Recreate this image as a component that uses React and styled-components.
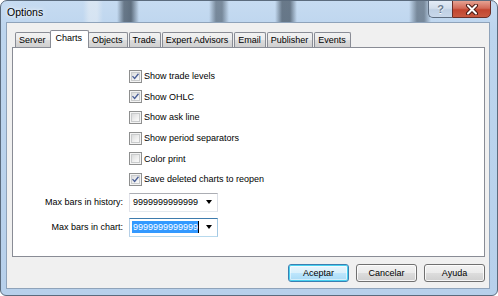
import React from "react";
import styled, { createGlobalStyle, css } from "styled-components";

const GlobalStyle = createGlobalStyle`
  html, body { margin: 0; padding: 0; width: 498px; height: 296px; overflow: hidden; background: #fff; }
  * { box-sizing: border-box; }
`;

const UI_FONT = `"Liberation Sans", Arial, sans-serif`;
const FS = "9px";

const Frame = styled.div`
  width: 498px;
  height: 296px;
  display: flex;
  flex-direction: column;
  border: 1px solid #5b6b7d;
  border-radius: 7px 7px 6px 6px;
  overflow: hidden;
  font-family: ${UI_FONT};
  background:
    linear-gradient(90deg,
      transparent 0, transparent 82px,
      rgba(235,240,245,0.5) 88px, rgba(235,240,245,0.5) 96px, transparent 102px,
      transparent 116px, rgba(28,40,52,0.55) 123px, rgba(28,40,52,0.6) 130px, transparent 138px,
      transparent 208px, rgba(28,40,52,0.45) 215px, rgba(28,40,52,0.45) 221px, transparent 228px,
      transparent 274px, rgba(28,40,52,0.55) 281px, rgba(28,40,52,0.55) 289px, transparent 296px,
      transparent 408px, rgba(28,40,52,0.45) 416px, rgba(28,40,52,0.45) 423px, transparent 430px,
      transparent 100%) top / 100% 23px no-repeat,
    linear-gradient(180deg, #c6dbf1 0, #bdd5ee 30px, #b7d0eb 100%);
`;

const TitleBar = styled.div`
  height: 21px;
  flex: none;
  display: flex;
  align-items: flex-start;
  padding: 0 6px 0 6px;
`;

const Title = styled.div`
  flex: 1;
  font-size: 10.5px;
  line-height: 21px;
  color: #000;
  padding-top: 1px;
  text-shadow: 0 0 6px rgba(255,255,255,0.95), 0 0 3px rgba(255,255,255,0.9);
`;

const CaptionButton = styled.div`
  height: 18px;
  margin-top: -1px;
  display: flex;
  align-items: center;
  justify-content: center;
  border: 1px solid #5e6d80;
  ${(p) =>
    p.$close
      ? css`
          width: 39px;
          border-color: #6b2e27;
          border-radius: 0 0 5px 0;
          background: linear-gradient(180deg, #e6a292 0, #d26a58 45%, #c2452f 55%, #c95a41 100%);
        `
      : css`
          width: 24px;
          border-right: none;
          border-radius: 0 0 0 5px;
          background: linear-gradient(180deg, #e3ecf7 0, #d2deec 45%, #bfd0e4 55%, #c9d8ea 100%);
        `}
`;

const HelpGlyph = styled.span`
  font-family: ${UI_FONT};
  font-size: 11px;
  font-weight: bold;
  color: #6a7b90;
  text-shadow: 0 1px 0 #fff;
  line-height: 1;
`;

const Client = styled.div`
  flex: 1;
  margin: 0 7px 6px 5px;
  border: 1px solid #8fa3ba;
  background: #f0f0f0;
  display: flex;
  flex-direction: column;
  padding: 9px 4px 6px 5px;
`;

const TabStrip = styled.div`
  display: flex;
  align-items: flex-end;
  height: 15px;
  padding-left: 3px;
  position: relative;
  z-index: 1;
`;

const Tab = styled.div`
  height: 15px;
  padding: 0 4px 0 3px;
  font-size: ${FS};
  line-height: 14px;
  color: #000;
  white-space: nowrap;
  border: 1px solid #898c95;
  border-bottom: none;
  border-radius: 2px 2px 0 0;
  background: linear-gradient(180deg, #f2f2f2 0, #ebebeb 50%, #dddddd 50%, #cfcfcf 100%);
  margin-right: 1px;
  ${(p) =>
    p.$active &&
    css`
      height: 18px;
      margin: 0 -1px -1px -2px;
      padding: 0 6px 0 5px;
      line-height: 15px;
      background: #fff;
    `}
`;

const Panel = styled.div`
  height: 210px;
  border: 1px solid #898c95;
  background: #fff;
  display: grid;
  grid-template-columns: 110px 1fr;
  column-gap: 6px;
  grid-auto-rows: min-content;
  align-content: start;
  padding-top: 18px;
`;

const CheckRow = styled.label`
  grid-column: 2;
  height: 20.6px;
  display: flex;
  align-items: center;
  gap: 2px;
  font-size: ${FS};
  color: #000;
`;

const Box = styled.span`
  width: 13px;
  height: 13px;
  flex: none;
  border: 1px solid #8e8f8f;
  background: #f4f4f4;
  display: flex;
  align-items: center;
  justify-content: center;
  padding: 1px;
`;

const BoxInner = styled.span`
  width: 100%;
  height: 100%;
  border: 1px solid #c9cbcc;
  background: linear-gradient(135deg, #dadbdc 0, #f0f0f0 60%, #fafafa 100%);
  display: flex;
  align-items: center;
  justify-content: center;
`;

const FieldLabel = styled.div`
  grid-column: 1;
  text-align: right;
  font-size: ${FS};
  color: #000;
  height: 19px;
  line-height: 19px;
  white-space: nowrap;
  margin-top: ${(p) => p.$top || 0}px;
`;

const Combo = styled.div`
  grid-column: 2;
  width: 89px;
  height: 19px;
  margin-top: ${(p) => p.$top || 0}px;
  display: flex;
  align-items: center;
  background: #fff;
  padding: 0 5px 0 2px;
  border: 1px solid;
  border-color: ${(p) => (p.$focus ? "#3d7bad #a4c9e3 #b7d9ed #b5cfe7" : "#abadb3 #dbdfe6 #e3e9ef #e2e3ea")};
`;

const ComboText = styled.span`
  flex: 1;
  font-size: ${FS};
  line-height: 12px;
  display: flex;
  align-items: center;
`;

const Selected = styled.span`
  background: #3399ff;
  color: #fff;
  padding: 0 0 0 1px;
  border-right: 1px solid #000;
`;

const Plain = styled.span`
  padding: 0 1px;
  color: #000;
`;

const Arrow = styled.span`
  width: 0;
  height: 0;
  border-left: 3.5px solid transparent;
  border-right: 3.5px solid transparent;
  border-top: 4px solid #000;
`;

const ButtonRow = styled.div`
  display: flex;
  justify-content: flex-end;
  gap: 7px;
  margin-top: 7px;
`;

const Button = styled.div`
  width: 61px;
  height: 18px;
  display: flex;
  align-items: center;
  justify-content: center;
  font-size: ${FS};
  color: #000;
  border: 1px solid #707070;
  border-radius: 3px;
  background: linear-gradient(180deg, #f2f2f2 0, #ebebeb 50%, #dddddd 50%, #cfcfcf 100%);
  box-shadow: inset 0 0 0 1px rgba(255,255,255,0.8);
  ${(p) =>
    p.$default &&
    css`
      border-color: #3c7fb1;
      box-shadow: inset 0 0 0 1px #48d1f0, inset 0 0 0 2px rgba(255,255,255,0.5);
      background: linear-gradient(180deg, #eaf6fd 0, #d9f0fc 50%, #bee6fd 50%, #a7d9f5 100%);
    `}
`;

const CheckMark = () => (
  <svg width="9" height="9" viewBox="0 0 9 9">
    <path d="M1.2 4.6 L3.4 7 L7.8 1.6" fill="none" stroke="#4a5f97" strokeWidth="1.7" strokeLinecap="square" />
  </svg>
);

const Checkbox = ({ checked, children }) => (
  <CheckRow>
    <Box>
      <BoxInner>{checked && <CheckMark />}</BoxInner>
    </Box>
    <span>{children}</span>
  </CheckRow>
);

const CloseGlyph = () => (
  <svg width="14" height="11" viewBox="0 0 14 11">
    <path d="M3 1.5 L11 9.5 M11 1.5 L3 9.5" stroke="#4a1a14" strokeWidth="4" strokeLinecap="round" />
    <path d="M3 1.5 L11 9.5 M11 1.5 L3 9.5" stroke="#ffffff" strokeWidth="2" strokeLinecap="round" />
  </svg>
);

const tabs = ["Server", "Charts", "Objects", "Trade", "Expert Advisors", "Email", "Publisher", "Events"];

const options = [
  { label: "Show trade levels", checked: true },
  { label: "Show OHLC", checked: true },
  { label: "Show ask line", checked: false },
  { label: "Show period separators", checked: false },
  { label: "Color print", checked: false },
  { label: "Save deleted charts to reopen", checked: true },
];

export default function App() {
  return (
    <>
      <GlobalStyle />
      <Frame>
        <TitleBar>
          <Title>Options</Title>
          <CaptionButton>
            <HelpGlyph>?</HelpGlyph>
          </CaptionButton>
          <CaptionButton $close>
            <CloseGlyph />
          </CaptionButton>
        </TitleBar>
        <Client>
          <TabStrip>
            {tabs.map((t) => (
              <Tab key={t} $active={t === "Charts"}>
                {t}
              </Tab>
            ))}
          </TabStrip>
          <Panel>
            {options.map((o) => (
              <Checkbox key={o.label} checked={o.checked}>
                {o.label}
              </Checkbox>
            ))}
            <FieldLabel $top={3}>Max bars in history:</FieldLabel>
            <Combo $top={3}>
              <ComboText>
                <Plain>9999999999999</Plain>
              </ComboText>
              <Arrow />
            </Combo>
            <FieldLabel $top={6}>Max bars in chart:</FieldLabel>
            <Combo $top={6} $focus>
              <ComboText>
                <Selected>9999999999999</Selected>
              </ComboText>
              <Arrow />
            </Combo>
          </Panel>
          <ButtonRow>
            <Button $default>Aceptar</Button>
            <Button>Cancelar</Button>
            <Button>Ayuda</Button>
          </ButtonRow>
        </Client>
      </Frame>
    </>
  );
}
